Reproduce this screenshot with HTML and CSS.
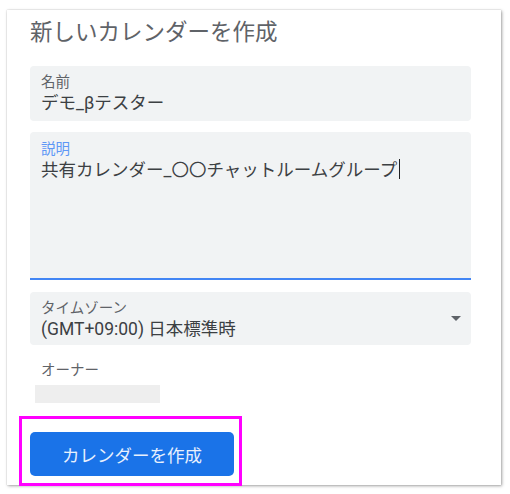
FILE: index.html
```html
<!DOCTYPE html>
<html lang="ja">
<head>
    <meta charset="UTF-8">
    <meta name="viewport" content="width=device-width, initial-scale=1.0">
    <title>新しいカレンダーを作成</title>
    <link rel="stylesheet" href="styles.css">
</head>
<body>
    <div class="card">
        <h1 class="title">新しいカレンダーを作成</h1>

        <div class="field">
            <div class="field-label">名前</div>
            <div class="field-value">デモ_βテスター</div>
        </div>

        <div class="field field-focus">
            <div class="field-label">説明</div>
            <div class="field-value">共有カレンダー_〇〇チャットルームグループ<span class="caret"></span></div>
        </div>

        <div class="field field-select">
            <div class="select-text">
                <div class="field-label">タイムゾーン</div>
                <div class="field-value">(GMT+09:00) 日本標準時</div>
            </div>
            <span class="arrow"></span>
        </div>

        <div class="owner">
            <div class="owner-label">オーナー</div>
            <div class="owner-bar"></div>
        </div>

        <div class="highlight">
            <button type="button" class="create-btn">カレンダーを作成</button>
        </div>
    </div>
</body>
</html>
```

FILE: styles.css
```css
body {
    margin: 0;
    background: #fff;
    font-family: Roboto, "Noto Sans CJK JP", sans-serif;
}

.card {
    margin: 10px 9px 9px 7px;
    padding: 0 30px 0 23px;
    background: #fff;
    box-shadow: 1px 1px 3px rgba(0, 0, 0, 0.35), 0 0 1px rgba(0, 0, 0, 0.25);
}

.title {
    margin: 0;
    padding: 6px 0 0 0;
    height: 50px;
    box-sizing: border-box;
    font-size: 22.5px;
    line-height: 32px;
    font-weight: 400;
    color: #5f6368;
}

.field {
    background: #f1f3f4;
    border-radius: 4px;
    padding: 9px 11px 6px;
    height: 55px;
    box-sizing: border-box;
    margin-top: 6px;
}

.field-label {
    font-size: 14.5px;
    line-height: 16px;
    color: #5f6368;
}

.field-value {
    font-size: 17.5px;
    line-height: 24px;
    color: #3c4043;
}

.field-focus {
    margin-top: 11px;
    height: 148px;
    padding-top: 10px;
    border-radius: 4px 4px 0 0;
    border-bottom: 2px solid #4285f4;
}

.field-focus .field-label {
    color: #5e97f6;
}

.caret {
    display: inline-block;
    width: 1px;
    height: 20px;
    margin-left: 2px;
    background: #202124;
    vertical-align: -3px;
}

.field-select {
    margin-top: 12px;
    height: 53px;
    padding: 9px 10px 4px 11px;
    display: flex;
    align-items: center;
}

.select-text {
    flex: 1;
}

.arrow {
    width: 0;
    height: 0;
    border-left: 5px solid transparent;
    border-right: 5px solid transparent;
    border-top: 5px solid #5f6368;
    margin-bottom: 5px;
}

.owner {
    padding-top: 17px;
}

.owner-label {
    font-size: 14.5px;
    line-height: 18px;
    color: #5f6368;
    padding-left: 11px;
}

.owner-bar {
    margin: 5px 0 0 5px;
    width: 125px;
    height: 18px;
    background: #eeeeee;
}

.highlight {
    display: inline-block;
    margin: 13px 0 -1px -11px;
    padding: 13px 5px 7px 8px;
    border: 3px solid #ff00ff;
}

.create-btn {
    display: block;
    width: 204px;
    height: 44px;
    border: none;
    border-radius: 5px;
    background: #1a73e8;
    color: #e8f0fd;
    font-family: Roboto, "Noto Sans CJK JP", sans-serif;
    font-size: 17.5px;
    cursor: pointer;
}
```
